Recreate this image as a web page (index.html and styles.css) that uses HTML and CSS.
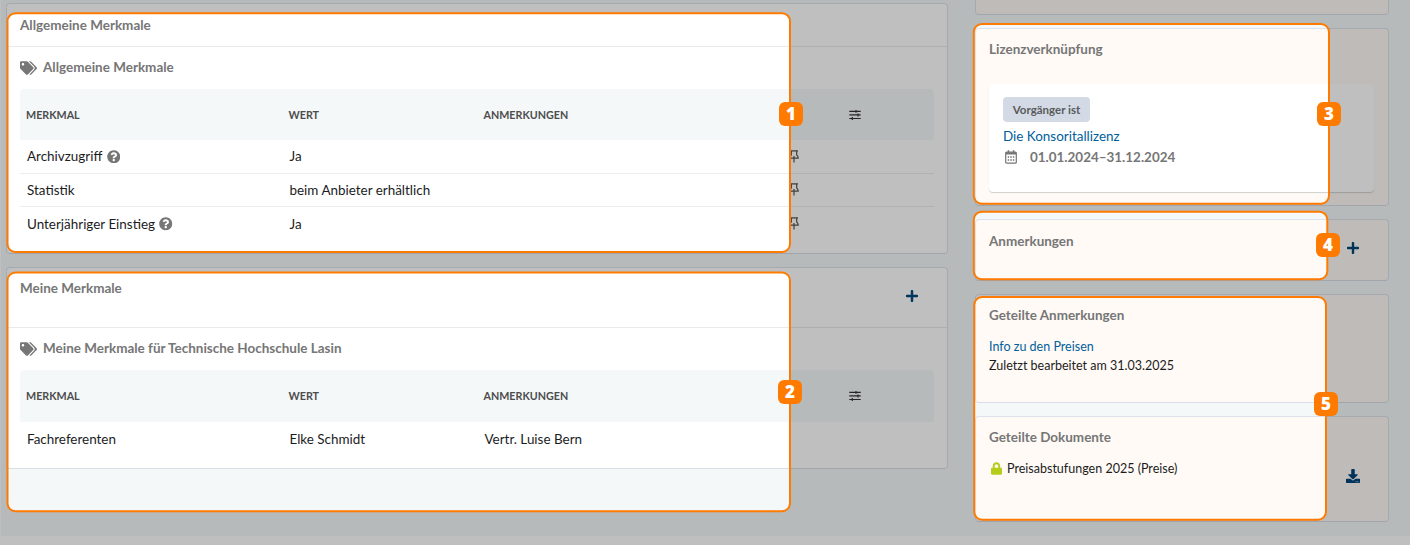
FILE: index.html
```
<!DOCTYPE html>
<html lang="de">
<head>
<meta charset="utf-8">
<title>Lizenz – Merkmale</title>
<link rel="stylesheet" href="styles.css">
</head>
<body>
<svg class="defs" width="0" height="0">
  <symbol id="tags" viewBox="0 0 640 512"><path d="M497.941 225.941L286.059 14.059A48 48 0 0 0 252.118 0H48C21.49 0 0 21.49 0 48v204.118a48 48 0 0 0 14.059 33.941l211.882 211.882c18.744 18.745 49.136 18.746 67.882 0l204.118-204.118c18.745-18.745 18.745-49.137 0-67.882zM112 160c-26.51 0-48-21.49-48-48s21.49-48 48-48 48 21.49 48 48-21.49 48-48 48zm513.941 133.823L421.823 497.941c-18.745 18.745-49.137 18.745-67.882 0l-.36-.36L527.64 323.522c16.999-16.999 26.36-39.6 26.36-63.64s-9.362-46.641-26.36-63.64L331.397 0h48.721a48 48 0 0 1 33.941 14.059l211.882 211.882c18.745 18.745 18.745 49.137 0 67.882z"/></symbol>
  <symbol id="help" viewBox="0 0 512 512"><path d="M504 256c0 136.997-111.043 248-248 248S8 392.997 8 256C8 119.083 119.043 8 256 8s248 111.083 248 248zM262.655 90c-54.497 0-89.255 22.957-116.549 63.758-3.536 5.286-2.353 12.415 2.715 16.258l34.699 26.31c5.205 3.947 12.621 3.008 16.665-2.122 17.864-22.658 30.113-35.797 57.303-35.797 20.429 0 45.698 13.148 45.698 32.958 0 14.976-12.363 22.667-32.534 33.976C247.128 238.528 216 254.941 216 296v4c0 6.627 5.373 12 12 12h56c6.627 0 12-5.373 12-12v-1.333c0-28.462 83.186-29.647 83.186-106.667 0-58.002-60.165-102-116.531-102zM256 338c-25.365 0-46 20.635-46 46 0 25.364 20.635 46 46 46s46-20.636 46-46c0-25.365-20.635-46-46-46z"/></symbol>
  <symbol id="plus" viewBox="0 0 12 12"><path d="M4.800 .8Q4.800 0 5.600 0h.8q.8 0 .8 .8V4.800h4q.8 0 .8 .8v.8q0 .8-.8 .8h-4v4q0 .8-.8 .8h-.8q-.8 0-.8-.8v-4h-4Q0 7.200 0 6.400v-.8q0-.8 .8-.8h4z"/></symbol>
  <symbol id="download" viewBox="0 0 512 512"><path d="M216 0h80c13.300 0 24 10.700 24 24v168h87.700c17.800 0 26.700 21.500 14.100 34.100L269.700 378.300c-7.500 7.500-19.800 7.500-27.300 0L90.100 226.100c-12.600-12.600-3.700-34.100 14.100-34.100H192V24c0-13.300 10.700-24 24-24zm296 376v112c0 13.300-10.700 24-24 24H24c-13.300 0-24-10.700-24-24V376c0-13.300 10.700-24 24-24h146.700l49 49c20.100 20.100 52.500 20.100 72.600 0l49-49H488c13.300 0 24 10.700 24 24zm-124 88c0-11-9-20-20-20s-20 9-20 20 9 20 20 20 20-9 20-20zm64 0c0-11-9-20-20-20s-20 9-20 20 9 20 20 20 20-9 20-20z"/></symbol>
  <symbol id="lock" viewBox="0 0 448 512"><path d="M400 224h-24v-72C376 68.200 307.800 0 224 0S72 68.200 72 152v72H48c-26.500 0-48 21.500-48 48v192c0 26.500 21.500 48 48 48h352c26.500 0 48-21.500 48-48V272c0-26.500-21.500-48-48-48zm-104 0H152v-72c0-39.700 32.300-72 72-72s72 32.300 72 72v72z"/></symbol>
  <symbol id="calendar" viewBox="0 0 12 14"><path d="M.7 3.200q0-1 1-1h8.600q1 0 1 1v9q0 1-1 1H1.700q-1 0-1-1z" fill="none" stroke="currentColor" stroke-width="1.200"/><path d="M.7 2.200h10.600v2.300H.7zM2.700.2h1.500v2.500H2.700zM7.800.2h1.500v2.500H7.800zM2.700 6.300h1.500v1.500H2.700zM5.250 6.300h1.500v1.500h-1.500zM7.800 6.300h1.500v1.500H7.800zM2.700 9.200h1.500v1.500H2.700zM5.250 9.200h1.500v1.500h-1.500zM7.800 9.200h1.500v1.500H7.800z"/></symbol>
  <symbol id="sliders" viewBox="0 0 12 10"><path d="M.3 1.300h11.400M.3 4.900h11.400M.3 8.500h11.400M7 0v2.800M9 3.500v2.900M3.300 7.100V10" fill="none" stroke="currentColor" stroke-width="1.200"/></symbol>
  <symbol id="pin" viewBox="0 0 10 13"><path d="M1 .8h8M2.300 .8v4.200Q.8 6 .8 8.200h8.400Q9.200 6 7.700 5V.8M5 6v6.500" fill="none" stroke="currentColor" stroke-width="1.200"/></symbol>
</svg>

<div class="page">
  <main class="col-main">
    <section class="card general">
      <header class="card-head"><h2>Allgemeine Merkmale</h2></header>
      <div class="card-body">
        <h3><svg class="i-tags"><use href="#tags"/></svg>Allgemeine Merkmale</h3>
        <div class="row th"><span>Merkmal</span><span>Wert</span><span>Anmerkungen</span><span></span><svg class="i-sliders"><use href="#sliders"/></svg></div>
        <div class="row"><span>Archivzugriff <svg class="i-help"><use href="#help"/></svg></span><span>Ja</span><span></span><svg class="i-pin"><use href="#pin"/></svg></div>
        <div class="row"><span>Statistik</span><span>beim Anbieter erhältlich</span><span></span><svg class="i-pin"><use href="#pin"/></svg></div>
        <div class="row"><span>Unterjähriger Einstieg <svg class="i-help"><use href="#help"/></svg></span><span>Ja</span><span></span><svg class="i-pin"><use href="#pin"/></svg></div>
      </div>
    </section>
    <section class="card own">
      <header class="card-head"><h2>Meine Merkmale</h2><svg class="i-plus"><use href="#plus"/></svg></header>
      <div class="card-body">
        <h3><svg class="i-tags"><use href="#tags"/></svg>Meine Merkmale für Technische Hochschule Lasin</h3>
        <div class="row th"><span>Merkmal</span><span>Wert</span><span>Anmerkungen</span><span></span><svg class="i-sliders"><use href="#sliders"/></svg></div>
        <div class="row"><span>Fachreferenten</span><span>Elke Schmidt</span><span>Vertr. Luise Bern</span></div>
      </div>
    </section>
  </main>

  <aside class="col-side">
    <section class="card warm previous"></section>
    <section class="card warm link-card">
      <h2>Lizenzverknüpfung</h2>
      <div class="inner">
        <span class="tag">Vorgänger ist</span>
        <a class="lic">Die Konsoritallizenz</a>
        <div class="dates"><svg class="i-cal"><use href="#calendar"/></svg>01.01.2024–31.12.2024</div>
      </div>
    </section>
    <section class="card warm notes"><h2>Anmerkungen</h2><svg class="i-plus"><use href="#plus"/></svg></section>
    <section class="card warm shared-notes">
      <h2>Geteilte Anmerkungen</h2>
      <a>Info zu den Preisen</a>
      <p>Zuletzt bearbeitet am 31.03.2025</p>
    </section>
    <section class="card warm shared-docs">
      <div><h2>Geteilte Dokumente</h2>
      <p class="doc"><svg class="i-lock"><use href="#lock"/></svg>Preisabstufungen 2025 (Preise)</p></div>
      <svg class="i-download"><use href="#download"/></svg>
    </section>
  </aside>
</div>

<!-- Tour overlay: dimmed page with five cut-outs -->
<svg class="overlay" width="1410" height="545">
  <mask id="holes">
    <rect width="1410" height="545" fill="#fff"/>
    <g fill="#000">
      <rect x="7.500" y="13.200" width="782.500" height="238.800" rx="8"/>
      <rect x="7.500" y="272.500" width="782.500" height="238.700" rx="8"/>
      <rect x="973.800" y="24" width="355.200" height="179.700" rx="8"/>
      <rect x="973.800" y="211.700" width="353.500" height="67.500" rx="8"/>
      <rect x="974.200" y="297" width="351.800" height="222.700" rx="8"/>
    </g>
  </mask>
  <rect width="1410" height="545" fill="#000" fill-opacity=".25" mask="url(#holes)"/>
  <g class="frames">
    <rect x="7.500" y="13.200" width="782.500" height="238.800" rx="8"/>
    <rect x="7.500" y="272.500" width="782.500" height="238.700" rx="8"/>
    <rect x="973.800" y="24" width="355.200" height="179.700" rx="8"/>
    <rect x="973.800" y="211.700" width="353.500" height="67.500" rx="8"/>
    <rect x="974.200" y="297" width="351.800" height="222.700" rx="8"/>
  </g>
</svg>
<b class="badge b1">1</b>
<b class="badge b2">2</b>
<b class="badge b3">3</b>
<b class="badge b4">4</b>
<b class="badge b5">5</b>
</body>
</html>
```

FILE: styles.css
```
* { box-sizing: border-box; }
body { margin: 0; width: 1410px; height: 545px; overflow: hidden; position: relative; background: #fff; color: #1b1c1d; font: 13.450px/19px Lato, sans-serif; }
.defs { position: absolute; }
svg { fill: currentColor; flex: none; }
h2, h3, p { margin: 0; }
h2, h3 { font-size: 13.470px; line-height: 19px; font-weight: 700; color: #767676; }
a { color: #00609c; }

.page { display: flex; gap: 27px; height: 536px; margin-left: 1px; padding-left: 5px; background: #f4f8f9; }
.col-main { width: 942px; padding-top: 3px; display: flex; flex-direction: column; gap: 13px; }
.col-side { width: 414px; display: flex; flex-direction: column; gap: 13px; }
.card { flex: none; background: #fff; border: 1px solid #dde3ec; border-bottom-color: #d8dde6; border-radius: 4px; }
.general { height: 251px; }
.own { height: 202px; }
.card-head { display: flex; justify-content: space-between; height: 43px; padding: 12px 29px 0 13px; border-bottom: 1px solid #e8eaec; }
.own .card-head { height: 60px; padding-top: 11px; }
.card-head .i-plus { margin-top: 11px; }
.card-body { padding: 11px 13px 0; }
h3 { display: flex; align-items: center; gap: 6px; margin-bottom: 12px; }

.row { display: grid; grid-template-columns: 262.500px 195px 304px 61px 1fr; align-items: center; height: 33.400px; padding-left: 7px; border-bottom: 1px solid #ecedee; }
.row:last-child { border-bottom: 0; }
.row span { white-space: nowrap; }
.row.th { height: 51px; margin-bottom: .6px; padding-left: 6px; background: #f4f8f9; border: 0; border-radius: 4px 4px 0 0; font-size: 10.720px; font-weight: 700; color: #4d4d4d; text-transform: uppercase; }
.own .row.th { height: 52px; padding-bottom: 1px; }

.warm { background: #fffaf6; }
.previous { height: 15px; border-top: 0; border-radius: 0 0 4px 4px; }
.link-card { height: 178px; padding: 11px 14px 0 13px; }
.inner { height: 108px; margin-top: 25px; padding: 13px 14px; background: #fff; border-radius: 4px; box-shadow: 0 1px 1px #d0d0d0; }
.tag { display: block; width: 87px; height: 25px; border-radius: 4px; background: #d3dae6; color: #5a5a5a; font-size: 11.500px; font-weight: 700; line-height: 25px; text-align: center; }
.lic { display: block; margin-top: 4px; font-size: 13.450px; line-height: 21px; }
.dates { display: flex; align-items: center; height: 21px; padding-left: 2px; gap: 13px; font-size: 13.450px; font-weight: 700; color: #767676; }
.notes { display: flex; justify-content: space-between; height: 62px; padding: 12px 29px 0 13px; }
.notes .i-plus { margin-top: 10px; }
.shared-notes { height: 109px; padding: 11px 13px; font-size: 12.520px; }
.shared-notes a { display: block; margin-top: 12px; }
.shared-docs { display: flex; justify-content: space-between; height: 106px; padding: 11px 28px 0 13px; font-size: 12.520px; }
.doc { display: flex; align-items: center; gap: 5px; margin-top: 12px; padding-left: 2px; }

.i-tags { width: 17px; height: 14px; }
.i-help { width: 13.500px; height: 13.500px; margin-left: 1px; vertical-align: -2px; color: #767676; }
.i-sliders { width: 12px; height: 10px; color: #333; }
.i-pin { width: 10px; height: 13px; color: #555; margin-bottom: 1px; }
.i-plus { width: 12px; height: 12px; color: #004678; }
.i-cal { width: 12px; height: 14px; margin-bottom: 2px; }
.i-lock { width: 11px; height: 13px; color: #b5cc18; }
.i-download { width: 14px; height: 14px; margin-top: 41px; color: #004678; }

.overlay { position: absolute; left: 0; top: 0; }
.frames { fill: none; stroke: #ff7a00; stroke-width: 2; }
.badge { position: absolute; width: 24px; height: 24px; border-radius: 6px; background: #ff7a00; color: #fff; font: 800 17px/24px "Open Sans", sans-serif; text-align: center; }
.b1 { left: 779px; top: 102px; }
.b2 { left: 778px; top: 380px; }
.b3 { left: 1317px; top: 102px; }
.b4 { left: 1316px; top: 233px; }
.b5 { left: 1314px; top: 392px; }
```
